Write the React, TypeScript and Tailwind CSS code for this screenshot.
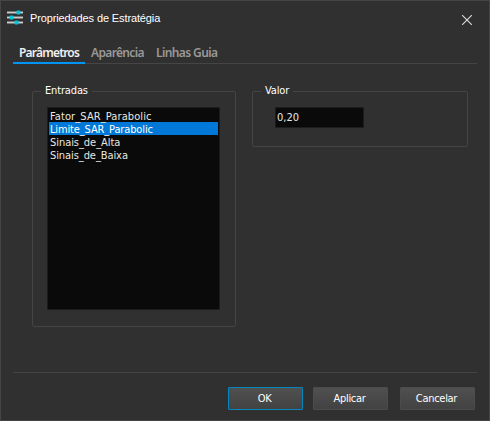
import type { ReactNode } from 'react';

const ENTRIES = [
  { name: 'Fator_SAR_Parabolic', tracking: 'tracking-[0.1px]' },
  { name: 'Limite_SAR_Parabolic', tracking: 'tracking-[-0.14px]' },
  { name: 'Sinais_de_Alta', tracking: 'tracking-[-0.05px]' },
  { name: 'Sinais_de_Baixa', tracking: 'tracking-[-0.08px]' },
];
const SELECTED = 'Limite_SAR_Parabolic';

const tahoma = "font-['DejaVu_Sans_Condensed','DejaVu_Sans',sans-serif] text-[11px] [font-stretch:condensed]";

function SlidersIcon() {
  return (
    <svg className="-mt-[2px]" width="16" height="15" viewBox="0 0 16 15" shapeRendering="crispEdges">
      <path d="M0 1h16v3H0zM0 6h16v3H0zM0 11h16v3H0z" fill="#777" />
      <path d="M0 2h16v1H0zM0 7h16v1H0zM0 12h16v1H0z" fill="#ccc" />
      <g fill="#00c8dc" shapeRendering="auto">
        <rect x="9.5" y="0.5" width="4" height="4" rx="1" />
        <rect x="2.5" y="5.5" width="4" height="4" rx="1" />
        <rect x="7.5" y="10.5" width="4" height="4" rx="1" />
      </g>
    </svg>
  );
}

function GroupBox({ title, className, children }: { title: string; className: string; children: ReactNode }) {
  return (
    <fieldset className={`relative rounded-[2px] border border-[#444] pt-[15px] ${className}`}>
      <span className={`absolute -top-[8px] left-[8px] bg-[#303030] px-[4px] leading-[14px] tracking-[-0.15px] text-white ${tahoma}`}>
        {title}
      </span>
      {children}
    </fieldset>
  );
}

function DialogButton({ label, primary = false, className = '' }: { label: string; primary?: boolean; className?: string }) {
  return (
    <button
      type="button"
      className={`h-[23px] w-[75px] rounded-[1px] border bg-linear-to-b from-[#505050] to-[#424242] pr-[2px] pt-px text-center leading-[20px] tracking-[-0.3px] text-white ${tahoma} ${
        primary ? 'border-[#0585bd]' : 'border-[#4c4c4c]'
      } ${className}`}
    >
      {label}
    </button>
  );
}

export default function App() {
  return (
    <div className="flex h-[421px] w-[490px] flex-col border border-[#454545] bg-[#303030]">
      {/* Title bar */}
      <div className="flex h-[37px] items-center pb-[2px] pl-[6px] pr-[17px]">
        <SlidersIcon />
        <span className="ml-[7px] font-['Liberation_Sans',Arial,sans-serif] text-[11px] tracking-[-0.12px] text-white">
          Propriedades de Estratégia
        </span>
        <svg className="ml-auto mt-[3px]" width="10" height="10" viewBox="0 0 10 10" stroke="#ddd" strokeWidth="1.1">
          <path d="M0 0l10 10M10 0L0 10" />
        </svg>
      </div>

      {/* Tabs */}
      <div className="mx-[12px] flex h-[26px] border-b border-[#454545] font-['Noto_Sans','Open_Sans',sans-serif] text-[12px] font-semibold leading-[30px] text-[#999]">
        <div className="h-[26px] w-[72px] border-b-2 border-[#0094f5] pl-[6px] tracking-[-0.8px] text-[#f0f0f0]">Parâmetros</div>
        <div className="w-[65px] pl-[6px] tracking-[-0.65px]">Aparência</div>
        <div className="pl-[6px] tracking-[-0.6px]">Linhas Guia</div>
      </div>

      <div className="flex h-[308px] items-start pl-[31px] pt-[27px]">
        <GroupBox title="Entradas" className="h-[236px] w-[204px] pl-[14px]">
          <ul className={`h-[203px] w-[173px] rounded-[1px] border border-[#1c1c1c] bg-[#0a0a0a] p-px text-[#e8e8e0] ${tahoma}`}>
            {ENTRIES.map(({ name, tracking }) => (
              <li key={name} className={`h-[13px] pl-px leading-[15px] ${tracking} ${name === SELECTED ? 'bg-[#0078d7] text-white' : ''}`}>
                {name}
              </li>
            ))}
          </ul>
        </GroupBox>
        <GroupBox title="Valor" className="ml-[16px] h-[56px] w-[216px] pl-[22px]">
          <div className={`h-[21px] w-[89px] rounded-[1px] border border-[#1c1c1c] bg-[#0a0a0a] pl-px leading-[19px] text-[#e8e8e0] ${tahoma}`}>
            0,20
          </div>
        </GroupBox>
      </div>

      {/* Footer */}
      <div className="mx-[12px] flex border-t border-[#454545] pl-[215px] pt-[14px]">
        <DialogButton label="OK" primary />
        <DialogButton label="Aplicar" className="ml-[10px]" />
        <DialogButton label="Cancelar" className="ml-[12px]" />
      </div>
    </div>
  );
}
